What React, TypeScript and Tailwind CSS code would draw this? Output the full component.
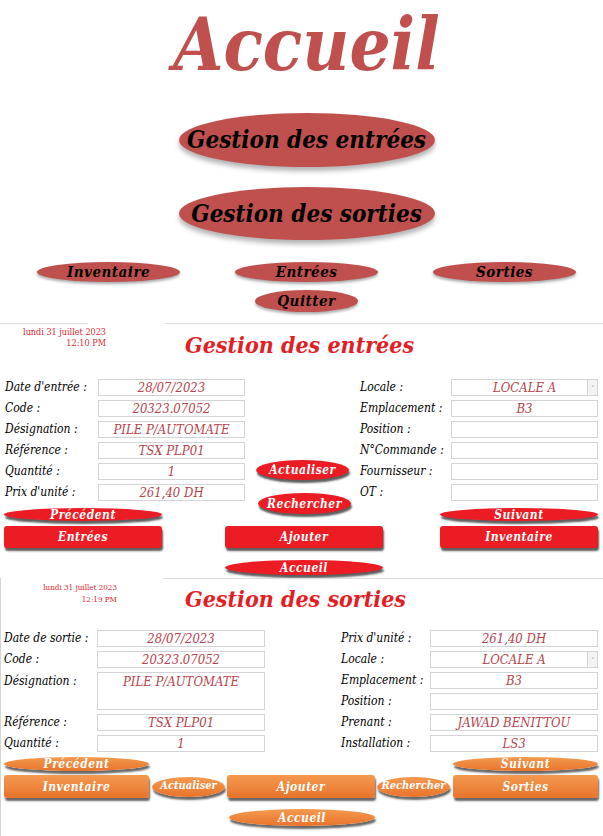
import React from 'react';

const serif = "font-['DejaVu_Serif_Condensed','DejaVu_Serif',serif] font-stretch-condensed";

const redBtn = 'bg-[#ec1c24] shadow-[1px_3px_2px_rgba(40,40,40,0.75)]';
const orangeBtn = 'bg-gradient-to-b from-[#f39a4f] to-[#e9732a] shadow-[1px_3px_2px_rgba(40,40,40,0.7)]';

function Oval({ label, className }: { label: string; className: string }) {
  return (
    <div className={`flex items-center justify-center rounded-[50%] whitespace-nowrap ${className}`}>
      {label}
    </div>
  );
}

function Box({ value, className = '', select = false }: { value?: string; className?: string; select?: boolean }) {
  return (
    <div className={`relative flex items-center justify-center h-[17px] border border-[#d4d4d4] bg-white text-[13px] italic text-[#b8434c] ${className}`}>
      {value}
      {select && (
        <span className="absolute right-0 top-0 bottom-0 w-[10px] border-l border-[#d4d4d4] bg-[#f3f3f3] flex items-center justify-center text-[6px] not-italic text-[#888]">
          ˅
        </span>
      )}
    </div>
  );
}

function Label({ text }: { text: string }) {
  return <div className="text-[12px] italic text-black leading-[17px] whitespace-nowrap">{text}</div>;
}

export default function App() {
  const btnText = 'text-white font-bold italic text-[12px] tracking-[0.5px]';
  return (
    <div className={`w-[603px] h-[836px] bg-white overflow-hidden ${serif}`}>
      {/* Accueil */}
      <section className="h-[323px] flex flex-col items-center pl-[10px]">
        <h1 className="mt-[5px] text-[72px] leading-[80px] italic font-bold text-[#c0504d]">Accueil</h1>
        <Oval
          label="Gestion des entrées"
          className="mt-[28px] w-[256px] h-[54px] bg-[#c0504d] shadow-[0_4px_5px_rgba(0,0,0,0.3)] text-[24px] font-bold italic text-black"
        />
        <Oval
          label="Gestion des sorties"
          className="mt-[20px] w-[256px] h-[53px] bg-[#c0504d] shadow-[0_4px_5px_rgba(0,0,0,0.3)] text-[24px] font-bold italic text-black"
        />
        <div className="mt-[22px] self-stretch -ml-[10px] flex gap-[55px] pl-[37px]">
          {['Inventaire', 'Entrées', 'Sorties'].map((t) => (
            <Oval
              key={t}
              label={t}
              className="w-[143px] h-[20px] bg-[#c0504d] shadow-[0_2px_3px_rgba(0,0,0,0.35)] text-[15px] font-bold italic text-black tracking-[0.5px]"
            />
          ))}
        </div>
        <div className="self-stretch -ml-[10px] pl-[255px] mt-[8px]">
          <Oval
            label="Quitter"
            className="w-[103px] h-[22px] bg-[#c0504d] shadow-[0_2px_3px_rgba(0,0,0,0.35)] text-[15px] font-bold italic text-black tracking-[0.5px]"
          />
        </div>
      </section>

      {/* Gestion des entrées */}
      <section className="h-[255px] flex flex-col">
        <div className="flex h-px">
          <div className="w-[88px] bg-[#dcdcdc]" />
          <div className="w-[77px]" />
          <div className="flex-1 bg-[#dcdcdc]" />
        </div>
        <div className="flex">
          <div className="w-[106px] pt-[3px] text-right text-[9px] leading-[11px] text-[#e0262c]">
            <div>lundi 31 juillet 2023</div>
            <div>12:10 PM</div>
          </div>
          <h2 className="ml-[79px] mt-[7px] text-[23px] leading-[28px] font-bold italic text-[#e31e24]">Gestion des entrées</h2>
        </div>
        <div className="flex mt-[20px]">
          <div className="grid grid-cols-[93px_147px] gap-y-[4px] pl-[5px] items-center">
            <Label text="Date d'entrée :" />
            <Box value="28/07/2023" />
            <Label text="Code :" />
            <Box value="20323.07052" />
            <Label text="Désignation :" />
            <Box value="PILE P/AUTOMATE" />
            <Label text="Référence :" />
            <Box value="TSX PLP01" />
            <Label text="Quantité :" />
            <Box value="1" />
            <Label text="Prix d'unité :" />
            <Box value="261,40 DH" />
          </div>
          <div className="w-[115px] flex flex-col pt-[81px] -mb-[13px]">
            <Oval label="Actualiser" className={`ml-[11px] w-[93px] h-[20px] ${redBtn} ${btnText}`} />
            <Oval label="Rechercher" className={`ml-[13px] mt-[13px] w-[93px] h-[21px] ${redBtn} ${btnText}`} />
          </div>
          <div className="grid grid-cols-[91px_147px] gap-y-[4px] items-center">
            <Label text="Locale :" />
            <Box value="LOCALE A" select />
            <Label text="Emplacement :" />
            <Box value="B3" />
            <Label text="Position :" />
            <Box />
            <Label text="N°Commande :" />
            <Box />
            <Label text="Fournisseur :" />
            <Box />
            <Label text="OT :" />
            <Box />
          </div>
        </div>
        <div className="flex justify-between pl-[4px] pr-[5px] mt-[7px]">
          <Oval label="Précédent" className={`w-[158px] h-[13px] ${redBtn} ${btnText}`} />
          <Oval label="Suivant" className={`w-[158px] h-[13px] ${redBtn} ${btnText}`} />
        </div>
        <div className="flex pl-[4px] mt-[5px]">
          <div className={`w-[158px] h-[22px] rounded-[3px] flex items-center justify-center ${redBtn} ${btnText}`}>Entrées</div>
          <div className={`ml-[63px] w-[158px] h-[22px] rounded-[3px] flex items-center justify-center ${redBtn} ${btnText}`}>Ajouter</div>
          <div className={`ml-[57px] w-[158px] h-[22px] rounded-[3px] flex items-center justify-center ${redBtn} ${btnText}`}>Inventaire</div>
        </div>
        <div className="pl-[225px] mt-[12px]">
          <Oval label="Accueil" className={`w-[158px] h-[15px] ${redBtn} ${btnText}`} />
        </div>
      </section>

      {/* Gestion des sorties */}
      <section className="h-[258px] flex flex-col border-l border-[#d4d4d4]">
        <div className="flex h-px">
          <div className="w-[162px]" />
          <div className="flex-1 bg-[#dcdcdc]" />
        </div>
        <div className="flex">
          <div className="w-[116px] pt-[3px] text-right text-[8px] leading-[12px] text-[#e0262c]">
            <div>lundi 31 juillet 2023</div>
            <div>12:19 PM</div>
          </div>
          <h2 className="ml-[68px] mt-[6px] text-[23px] leading-[28px] font-bold italic text-[#e31e24]">Gestion des sorties</h2>
        </div>
        <div className="flex mt-[17px]">
          <div className="grid grid-cols-[93px_168px] grid-rows-[repeat(6,17px)] gap-y-[4px] pl-[3px] items-center">
            <Label text="Date de sortie :" />
            <Box value="28/07/2023" />
            <Label text="Code :" />
            <Box value="20323.07052" />
            <div className="row-span-2 self-start pt-[1px]">
              <Label text="Désignation :" />
            </div>
            <div className="row-span-2 self-stretch border border-[#d4d4d4] flex justify-center text-[13px] italic text-[#b8434c] leading-[16px] pt-[1px]">
              PILE P/AUTOMATE
            </div>
            <Label text="Référence :" />
            <Box value="TSX PLP01" />
            <Label text="Quantité :" />
            <Box value="1" />
          </div>
          <div className="w-[76px]" />
          <div className="grid grid-cols-[89px_168px] grid-rows-[repeat(6,17px)] gap-y-[4px] items-center">
            <Label text="Prix d'unité :" />
            <Box value="261,40 DH" />
            <Label text="Locale :" />
            <Box value="LOCALE A" select />
            <Label text="Emplacement :" />
            <Box value="B3" />
            <Label text="Position :" />
            <Box />
            <Label text="Prenant :" />
            <Box value="JAWAD BENITTOU" />
            <Label text="Installation :" />
            <Box value="LS3" />
          </div>
        </div>
        <div className="flex justify-between pl-[3px] pr-[5px] mt-[5px]">
          <Oval label="Précédent" className={`w-[145px] h-[14px] ${orangeBtn} ${btnText}`} />
          <Oval label="Suivant" className={`w-[145px] h-[14px] ${orangeBtn} ${btnText}`} />
        </div>
        <div className="flex items-center pl-[3px] mt-[4px]">
          <div className={`w-[145px] h-[23px] rounded-[3px] flex items-center justify-center ${orangeBtn} ${btnText}`}>Inventaire</div>
          <Oval label="Actualiser" className={`ml-[3px] w-[73px] h-[20px] ${orangeBtn} text-white font-bold italic text-[11px]`} />
          <div className={`ml-[2px] w-[148px] h-[23px] rounded-[3px] flex items-center justify-center ${orangeBtn} ${btnText}`}>Ajouter</div>
          <Oval label="Rechercher" className={`ml-[2px] w-[73px] h-[20px] ${orangeBtn} text-white font-bold italic text-[11px]`} />
          <div className={`ml-[3px] w-[145px] h-[23px] rounded-[3px] flex items-center justify-center ${orangeBtn} ${btnText}`}>Sorties</div>
        </div>
        <div className="pl-[228px] mt-[11px]">
          <Oval label="Accueil" className={`w-[146px] h-[17px] ${orangeBtn} ${btnText}`} />
        </div>
      </section>
    </div>
  );
}
